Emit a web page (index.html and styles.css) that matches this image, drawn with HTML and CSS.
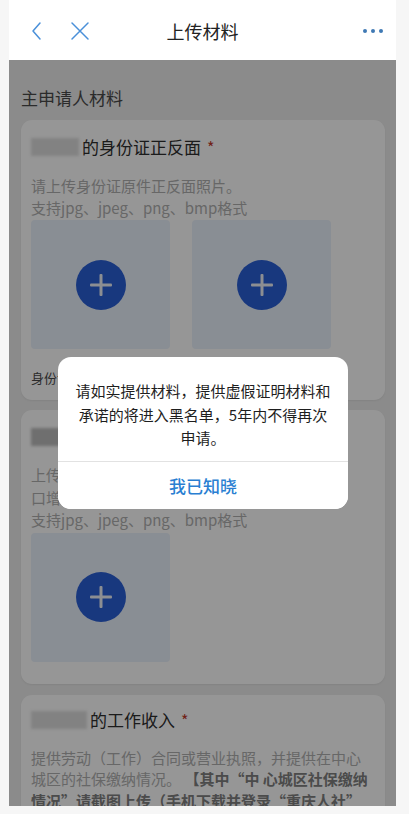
FILE: index.html
```html
<!DOCTYPE html>
<html lang="zh-CN">
<head>
<meta charset="utf-8">
<title>上传材料</title>
<link rel="stylesheet" href="styles.css">
</head>
<body>
<div class="phone">
  <header class="header">
    <div class="nav-left">
      <svg class="icon" width="14" height="20" viewBox="0 0 14 20"><path d="M10 2 L3 10 L10 18" fill="none" stroke="#4a90d9" stroke-width="1.5" stroke-linecap="round" stroke-linejoin="round"/></svg>
      <svg class="icon close" width="20" height="20" viewBox="0 0 20 20"><path d="M2 2 L18 18 M18 2 L2 18" fill="none" stroke="#4a90d9" stroke-width="1.5" stroke-linecap="round"/></svg>
    </div>
    <h1 class="title">上传材料</h1>
    <div class="more"><span></span><span></span><span></span></div>
  </header>

  <main class="content">
    <h2 class="section-title">主申请人材料</h2>

    <section class="card card-id">
      <div class="card-title"><span class="blur-name w48"></span>的身份证正反面<span class="req">*</span></div>
      <p class="desc">请上传身份证原件正反面照片。<br>支持jpg、jpeg、png、bmp格式</p>
      <div class="uploads">
        <div class="upload"><span class="plus"></span></div>
        <div class="upload"><span class="plus"></span></div>
      </div>
      <div class="labels"><span>身份证人像面</span><span>身份证国徽面</span></div>
    </section>

    <section class="card card-hukou">
      <div class="card-title"><span class="blur-name dark w140"></span></div>
      <p class="desc">上传户口簿首页及本人页，如集体户口需上传人<br>口增减页（可在户籍所在地派出所开具）。<br>支持jpg、jpeg、png、bmp格式</p>
      <div class="uploads">
        <div class="upload"><span class="plus"></span></div>
      </div>
    </section>

    <section class="card card-work">
      <div class="card-title"><span class="blur-name w56"></span>的工作收入<span class="req">*</span></div>
      <p class="desc">提供劳动（工作）合同或营业执照，并提供在中心<br>城区的社保缴纳情况。 <b>【其中“中 心城区社保缴纳<br>情况”请截图上传（手机下载并登录“重庆人社”</b></p>
    </section>

    <div class="mask"></div>

    <div class="dialog">
      <p class="dialog-text">请如实提供材料，提供虚假证明材料和承诺的将进入黑名单，5年内不得再次申请。</p>
      <button class="dialog-btn">我已知晓</button>
    </div>
  </main>
</div>
</body>
</html>
```

FILE: styles.css
```css
* { box-sizing: border-box; }
html, body { margin: 0; padding: 0; }
body {
  background: #f6f6f6;
  font-family: "Noto Sans CJK SC", "Noto Sans", sans-serif;
  width: 409px;
  height: 814px;
  overflow: hidden;
}
.phone {
  margin-left: 9px;
  width: 387px;
  height: 806px;
  display: flex;
  flex-direction: column;
  overflow: hidden;
}
.header {
  height: 60px;
  flex: none;
  background: #fff;
  display: flex;
  align-items: center;
  position: relative;
  padding: 0 13px 0 21px;
}
.nav-left {
  display: flex;
  align-items: center;
  gap: 26px;
  padding-top: 2px;
}
.icon { display: block; }
.title {
  position: absolute;
  left: 0; right: 0;
  top: 0;
  margin: 0;
  text-align: center;
  font-size: 18px;
  font-weight: 400;
  line-height: 62px;
  color: #222;
  pointer-events: none;
}
.more {
  margin-left: auto;
  display: flex;
  gap: 4px;
  padding-top: 2px;
}
.more span {
  width: 4px; height: 4px;
  border-radius: 50%;
  background: #3f79b4;
}
.content {
  flex: 1;
  position: relative;
  background: #ececec;
  padding: 26px 11px 0 12px;
  overflow: hidden;
}
.section-title {
  margin: 0 0 10px;
  font-size: 17px;
  font-weight: 400;
  line-height: 24px;
  color: #4a4a4a;
}
.card {
  background: #fff;
  border-radius: 11px;
  padding: 15px 10px 22px;
  margin-bottom: 10px;
  box-shadow: 0 1px 2px rgba(0,0,0,0.06);
}
.card-title {
  font-size: 17px;
  line-height: 24px;
  color: #2e2e2e;
  display: flex;
  align-items: center;
  height: 24px;
}
.blur-name {
  display: inline-block;
  height: 18px;
  background: #dedede;
  filter: blur(1.5px);
  margin-right: 3px;
}
.blur-name.dark { background: #bdbdbd; }
.w48 { width: 48px; }
.w56 { width: 56px; }
.w140 { width: 140px; }
.req {
  color: #c0392b;
  margin-left: 6px;
  font-size: 16px;
}
.desc {
  margin: 16px 0 0;
  font-size: 15px;
  line-height: 22px;
  color: #b0b0b0;
}
.desc b {
  color: #808080;
  font-weight: 700;
}
.card-hukou .desc { margin-top: 15px; line-height: 22.5px; }
.uploads {
  display: flex;
  gap: 22px;
  margin-top: 1px;
}
.upload {
  width: 139px;
  height: 129px;
  background: #e9f1fc;
  border-radius: 4px;
  display: flex;
  align-items: center;
  justify-content: center;
}
.plus {
  width: 50px; height: 50px;
  border-radius: 50%;
  background: #2a5fd6;
  position: relative;
}
.plus::before, .plus::after {
  content: "";
  position: absolute;
  left: 50%; top: 50%;
  background: #eef2f8;
  border-radius: 1px;
  transform: translate(-50%, -50%);
}
.plus::before { width: 22px; height: 3px; }
.plus::after { width: 3px; height: 22px; }
.labels {
  display: flex;
  gap: 100px;
  font-size: 13px;
  line-height: 20px;
  color: #4a4a4a;
  margin-top: 19px;
}
.card-id { padding-bottom: 12px; }
.card-hukou { margin-bottom: 11px; }
.card-work { padding-top: 13px; }
.card-work .desc { margin-top: 15px; line-height: 21.5px; }

.mask {
  position: absolute;
  inset: 0;
  background: rgba(0,0,0,0.41);
}
.dialog {
  position: absolute;
  left: 49px;
  top: 297px;
  width: 290px;
  background: #fff;
  border-radius: 13px;
  overflow: hidden;
}
.dialog-text {
  margin: 0;
  padding: 22px 16px 11px;
  text-align: center;
  font-size: 15px;
  line-height: 23.5px;
  color: #1e1e1e;
}
.dialog-btn {
  display: block;
  width: 100%;
  height: 48px;
  border: 0;
  border-top: 1px solid #e2e2e2;
  background: #fff;
  font-family: inherit;
  font-size: 17px;
  font-weight: 500;
  color: #2a7fd2;
  padding: 0;
}
```
